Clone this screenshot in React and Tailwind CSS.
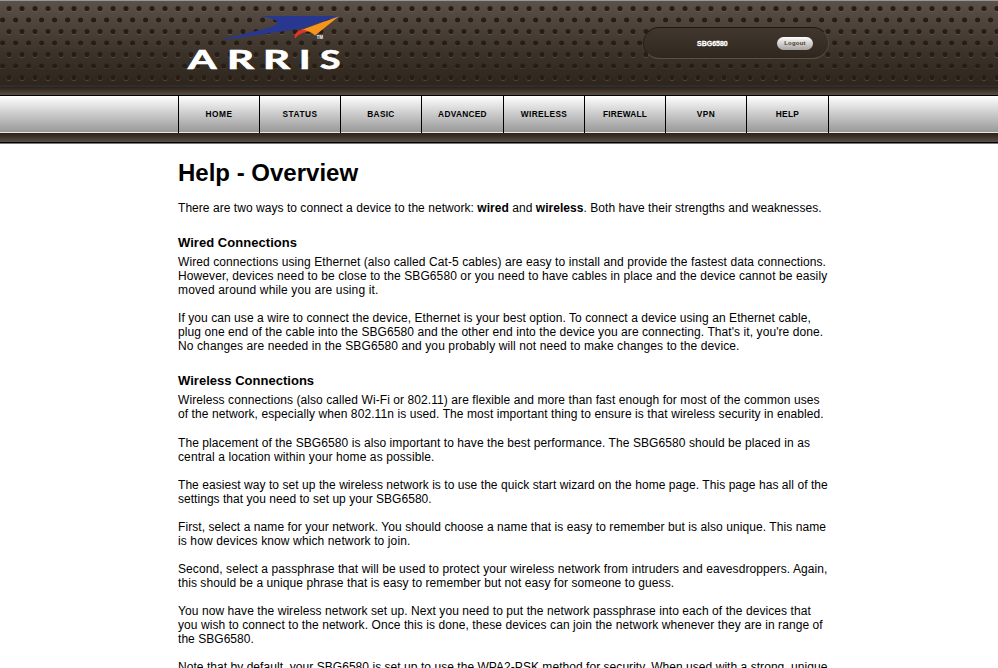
const NAV = [
  ['HOME', 'w-[81px]', 'tracking-[0.5px]'],
  ['STATUS', 'w-[81px]', 'tracking-[0.5px]'],
  ['BASIC', 'w-[81px]', 'tracking-[0.3px]'],
  ['ADVANCED', 'w-[82px]', 'tracking-[0.3px]'],
  ['WIRELESS', 'w-[81px]', 'tracking-[0.4px]'],
  ['FIREWALL', 'w-[81px]', 'tracking-[0.2px]'],
  ['VPN', 'w-[81px]', 'tracking-[0.4px]'],
  ['HELP', 'w-[82px]', 'tracking-[0.3px]'],
];

// Each line carries the extra width, in pixels, that is spread over its letters.
const WIRED = [
  [
    ['Wired connections using Ethernet (also called Cat-5 cables) are easy to install and provide the fastest data connections.', 11],
    ['However, devices need to be close to the SBG6580 or you need to have cables in place and the device cannot be easily', 11.5],
    ['moved around while you are using it.', 5],
  ],
  [
    ['If you can use a wire to connect the device, Ethernet is your best option. To connect a device using an Ethernet cable,', 8],
    ["plug one end of the cable into the SBG6580 and the other end into the device you are connecting. That's it, you're done.", 9],
    ['No changes are needed in the SBG6580 and you probably will not need to make changes to the device.', 10.5],
  ],
];

const WIRELESS = [
  [
    ['Wireless connections (also called Wi-Fi or 802.11) are flexible and more than fast enough for most of the common uses', 9.5],
    ['of the network, especially when 802.11n is used. The most important thing to ensure is that wireless security in enabled.', 10.5],
  ],
  [
    ['The placement of the SBG6580 is also important to have the best performance. The SBG6580 should be placed in as', 8.5],
    ['central a location within your home as possible.', 5],
  ],
  [
    ['The easiest way to set up the wireless network is to use the quick start wizard on the home page. This page has all of the', 7],
    ['settings that you need to set up your SBG6580.', 1.5],
  ],
  [
    ['First, select a name for your network. You should choose a name that is easy to remember but is also unique. This name', 8.5],
    ['is how devices know which network to join.', 5],
  ],
  [
    ['Second, select a passphrase that will be used to protect your wireless network from intruders and eavesdroppers. Again,', 10.5],
    ['this should be a unique phrase that is easy to remember but not easy for someone to guess.', 6.5],
  ],
  [
    ['You now have the wireless network set up. Next you need to put the network passphrase into each of the devices that', 9],
    ['you wish to connect to the network. Once this is done, these devices can join the network whenever they are in range of', 9],
    ['the SBG6580.', 0.5],
  ],
  [
    ['Note that by default, your SBG6580 is set up to use the WPA2-PSK method for security. When used with a strong, unique', 5.5],
  ],
];

function Paragraph({ lines, className = 'mb-[14px]' }) {
  return (
    <p className={className}>
      {lines.map(([text, extra]) => (
        <span key={text} className="block whitespace-nowrap" style={{ letterSpacing: `${extra / text.length}px` }}>{text}</span>
      ))}
    </p>
  );
}

function Logo() {
  const letters = [
    ['A', 188, 28.5],
    ['R', 227, 27],
    ['R', 263, 27],
    ['I', 299, 11.5],
    ['S', 320, 20.5],
  ];
  return (
    <svg className="ml-[178px] shrink-0" width="170" height="84" viewBox="178 0 170 84">
      <path d="M260 16H339L302 28.500L223 40V39L268 28C282 24 281 19.500 260 16Z" fill="#283891" />
      <path d="M339 16.300L315 35.500C312 32 306 30 300 30.500Z" fill="#f7941e" />
      <path d="M295 38.500C294 34 297 31 301 30C303.500 29.500 306 30 308 31.500C302 32.500 298 35 295 38.500Z" fill="#e63329" />
      <text x="316.500" y="39" fontSize="4.500" fontWeight="700" fill="#fff" fontFamily="Liberation Sans">TM</text>
      {letters.map(([l, x, w]) => (
        <text key={x} x={x} y="68.500" fontSize="27" fontWeight="700" fill="#fff" stroke="#fff" strokeWidth=".7" fontFamily="Lato" textLength={w} lengthAdjust="spacingAndGlyphs">{l}</text>
      ))}
    </svg>
  );
}

function Perforation() {
  return (
    <svg className="absolute inset-x-0 -top-px" width="998" height="84">
      <defs>
        <pattern id="dots" width="13" height="23" patternUnits="userSpaceOnUse">
          <circle cx="9" cy="9.300" r="2.600" fill="#7a6e63" fillOpacity=".45" />
          <circle cx="9" cy="8.500" r="2.600" fill="#271d15" />
          <circle cx="2.600" cy="20.800" r="2.600" fill="#7a6e63" fillOpacity=".45" />
          <circle cx="2.600" cy="20" r="2.600" fill="#271d15" />
        </pattern>
      </defs>
      <rect width="998" height="84" fill="url(#dots)" />
    </svg>
  );
}

export default function App() {
  return (
    <div className="h-[668px] w-[998px] overflow-hidden bg-white font-['Liberation_Sans',Arial,sans-serif] text-black">
      <header>
        <div className="relative h-[85px] border-t border-[#95999d] bg-linear-to-b from-[#5c5149] via-[#3a3129] via-65% to-[#2e251d]">
          <Perforation />
          <div className="relative -mt-px flex h-[84px]">
            <Logo />
            <div className="mt-[27px] ml-[295px] flex h-[32px] w-[186px] items-center rounded-full border border-t-[#1f1812] border-r-[#51473e] border-b-[#5a5047] border-l-[#2a211a] bg-linear-to-b from-[#41372f] to-[#30271f]">
              <span className="ml-[53px] w-[32px] text-[7px] leading-none font-bold whitespace-nowrap text-white [-webkit-text-stroke:0.3px_white]">SBG6580</span>
              <button className="ml-[48px] h-[13px] w-[36px] rounded-full bg-linear-to-b from-white to-[#a6a4a2] text-[6px] leading-none font-bold tracking-[0.2px] text-[#51402a]">Logout</button>
            </div>
          </div>
        </div>
        <div className="h-[11px] border-t-2 border-b border-t-[#302e2c] border-b-black bg-linear-to-b from-[#2b2119] to-[#5a4f47]" />
        <nav className="flex h-[37px] border-b border-[#e6e8e5] bg-linear-to-b from-white to-[#999] pl-[178px]">
          {NAV.map(([name, width, tracking]) => (
            <a key={name} className={`${width} ${tracking} -mb-px flex items-center justify-center border-l border-black text-[8.3px] leading-none font-bold`}>{name}</a>
          ))}
          <span className="-mb-px w-px bg-black" />
        </nav>
        <div className="h-[10px] border-b border-black bg-linear-to-b from-[#2b2119] to-[#5a4f47]" />
        <div className="h-px bg-[#777]" />
      </header>
      <main className="ml-[178px] w-[660px] pt-[15px] text-[12px] leading-[14px]">
        <h1 className="text-[24px] leading-[28px] font-bold">Help - Overview</h1>
        <p className="mt-[14px] tracking-[0.045px] whitespace-nowrap">
          There are two ways to connect a device to the network: <b>wired</b> and <b>wireless</b>. Both have their strengths and weaknesses.
        </p>
        <h2 className="mt-[20px] mb-[5px] text-[13px] leading-[15px] font-bold tracking-[0.04px]">Wired Connections</h2>
        {WIRED.map((lines) => <Paragraph key={lines[0][0]} lines={lines} />)}
        <h2 className="mt-[20px] mb-[5px] text-[13px] leading-[15px] font-bold tracking-[0.02px]">Wireless Connections</h2>
        {WIRELESS.map((lines, i) => <Paragraph key={lines[0][0]} lines={lines} className={i ? 'mb-[14px]' : 'mb-[15px]'} />)}
      </main>
    </div>
  );
}
